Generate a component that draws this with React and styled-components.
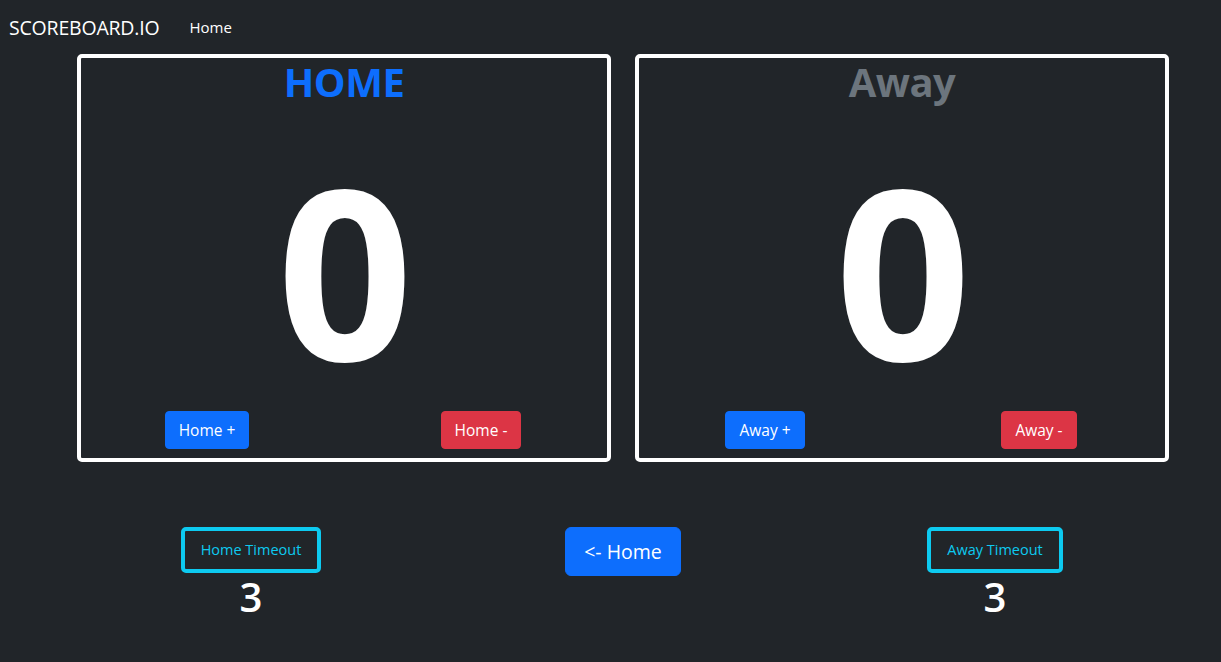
import React from 'react';
import styled, { createGlobalStyle } from 'styled-components';

const GlobalStyle = createGlobalStyle`
    body {
        margin: 0;
        background-color: #212529;
        color: #fff;
        font-family: "Open Sans", "Noto Sans", sans-serif;
    }
    * { box-sizing: border-box; }
`;

const Navbar = styled.nav`
    display: flex;
    align-items: center;
    height: 54px;
    padding: 0 9px;
`;

const Brand = styled.span`
    font-size: 19.5px;
    color: #fff;
    margin-right: 30px;
    letter-spacing: -0.2px;
`;

const NavLink = styled.a`
    font-size: 15px;
    color: #fff;
    text-decoration: none;
`;

const Container = styled.div`
    width: 1116px;
    margin-left: 65px;
`;

const Row = styled.div`
    display: grid;
    grid-template-columns: 1fr 1fr;
`;

const Col = styled.div`
    padding: 0 12px;
`;

const ScoreBox = styled.div`
    height: 408px;
    border: 4px solid #fff;
    border-radius: 5px;
    display: flex;
    flex-direction: column;
    align-items: stretch;
`;

const TeamName = styled.h2`
    margin: 0;
    font-size: 40px;
    line-height: 1.2;
    font-weight: 700;
    text-align: center;
    color: ${({ $muted }) => ($muted ? '#6c757d' : '#0d6efd')};
    letter-spacing: -0.5px;
`;

const Score = styled.div`
    flex: 1;
    display: flex;
    align-items: center;
    justify-content: center;
    padding-top: 22px;
    font-size: 238px;
    line-height: 0.8;
    font-weight: 700;
    letter-spacing: -2px;
`;

const ButtonRow = styled.div`
    display: flex;
    justify-content: space-between;
    padding-bottom: 9px;
`;

const Cell = styled.div`
    width: 252px;
    display: flex;
    justify-content: center;
`;

const Btn = styled.button`
    font-family: inherit;
    font-size: 15.5px;
    line-height: 24px;
    padding: 6px 13px;
    border: 1px solid ${({ $danger }) => ($danger ? '#dc3545' : '#0d6efd')};
    background-color: ${({ $danger }) => ($danger ? '#dc3545' : '#0d6efd')};
    color: #fff;
    border-radius: 4px;
`;

const BottomRow = styled.div`
    display: grid;
    grid-template-columns: repeat(3, 1fr);
    margin-top: 65px;
`;

const BottomCol = styled.div`
    display: flex;
    flex-direction: column;
    align-items: center;
`;

const TimeoutBtn = styled.button`
    font-family: inherit;
    font-size: 14.5px;
    line-height: 24px;
    padding: 7px 16px;
    border: 4px solid #0dcaf0;
    background: transparent;
    color: #0dcaf0;
    border-radius: 5px;
`;

const Count = styled.div`
    font-size: 40px;
    line-height: 48px;
    font-weight: 600;
    color: #fff;
`;

const BackBtn = styled.button`
    font-family: inherit;
    font-size: 19.5px;
    line-height: 31px;
    padding: 8px 18px;
    border: 1px solid #0d6efd;
    background-color: #0d6efd;
    color: #fff;
    border-radius: 6px;
`;

const teams = [
    { name: 'HOME', label: 'Home', muted: false },
    { name: 'Away', label: 'Away', muted: true },
];

const App = () => {
    return (
        <>
            <GlobalStyle />
            <Navbar>
                <Brand>SCOREBOARD.IO</Brand>
                <NavLink href="#">Home</NavLink>
            </Navbar>
            <Container>
                <Row>
                    {teams.map((t) => (
                        <Col key={t.name}>
                            <ScoreBox>
                                <TeamName $muted={t.muted}>{t.name}</TeamName>
                                <Score>0</Score>
                                <ButtonRow>
                                    <Cell><Btn>{t.label} +</Btn></Cell>
                                    <Cell><Btn $danger>{t.label} -</Btn></Cell>
                                </ButtonRow>
                            </ScoreBox>
                        </Col>
                    ))}
                </Row>
                <BottomRow>
                    <BottomCol>
                        <TimeoutBtn>Home Timeout</TimeoutBtn>
                        <Count>3</Count>
                    </BottomCol>
                    <BottomCol>
                        <BackBtn>&lt;- Home</BackBtn>
                    </BottomCol>
                    <BottomCol>
                        <TimeoutBtn>Away Timeout</TimeoutBtn>
                        <Count>3</Count>
                    </BottomCol>
                </BottomRow>
            </Container>
        </>
    );
};

export default App;
